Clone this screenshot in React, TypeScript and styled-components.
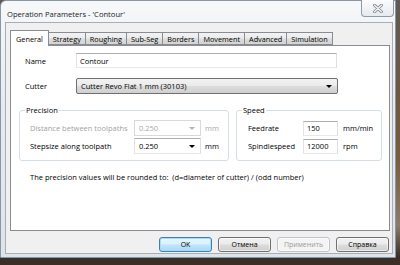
import styled, { createGlobalStyle } from 'styled-components'

const GlobalStyle = createGlobalStyle`
    html, body {
        margin: 0;
        padding: 0;
        width: 400px;
        height: 265px;
        overflow: hidden;
        background: linear-gradient(to bottom, #5e5a55 0%, #6f5840 35%, #7a5b3c 60%, #8c7c6a 85%, #3a2f26 97%);
        font-family: 'Open Sans', 'Noto Sans', sans-serif;
        font-size: 7.5px;
        color: #000;
    }
`

const Window = styled.div`
    box-sizing: border-box;
    width: 396px;
    height: 258px;
    display: flex;
    flex-direction: column;
    border: 1px solid #8a96a3;
    border-radius: 6px 0 0 0;
    background: linear-gradient(to bottom, #f6f8fa 0%, #e7ebef 40%, #dfe4e9 100%);
`

const TitleBar = styled.div`
    height: 21px;
    display: flex;
    justify-content: space-between;
    align-items: flex-start;
    flex-shrink: 0;
`

const Title = styled.div`
    padding: 8px 0 0 6px;
    line-height: 10px;
    font-size: 7.6px;
    color: #1a1a1a;
`

const CloseButton = styled.div`
    box-sizing: border-box;
    width: 33px;
    height: 17px;
    margin: -1px 1px 0 0;
    border: 1px solid #8d9aa8;
    border-top: none;
    border-radius: 0 0 4px 4px;
    background: linear-gradient(to bottom, #fbfcfd, #e6eaee);
    display: flex;
    align-items: center;
    justify-content: center;
`

const Client = styled.div`
    flex: 1;
    margin: 0 2px 3px 4px;
    border: 1px solid #a7aeb7;
    background: #f0f0f0;
    padding: 7px 2px 0 4px;
    display: flex;
    flex-direction: column;
`

const TabStrip = styled.div`
    display: flex;
    align-items: flex-end;
    height: 15px;
    position: relative;
    z-index: 1;
`

const Tab = styled.div<{ $active?: boolean }>`
    box-sizing: border-box;
    height: ${({ $active }) => ($active ? '16px' : '13px')};
    margin-bottom: ${({ $active }) => ($active ? '-1px' : '0')};
    margin-left: -1px;
    padding: 0 ${({ $active }) => ($active ? '5px' : '4px')};
    border: 1px solid #898c95;
    border-bottom: ${({ $active }) => ($active ? 'none' : '1px solid #898c95')};
    background: ${({ $active }) =>
        $active
            ? '#ffffff'
            : 'linear-gradient(to bottom, #f3f3f3 0%, #ebebeb 45%, #dddddd 55%, #d3d3d3 100%)'};
    display: flex;
    align-items: center;
    line-height: 10px;
    font-size: 7.3px;
    white-space: nowrap;
    &:first-child {
        margin-left: 0;
    }
`

const Panel = styled.div`
    box-sizing: border-box;
    width: 380px;
    height: 186px;
    border: 1px solid #898c95;
    background: #ffffff;
    padding: 7px 0 0 0;
    display: flex;
    flex-direction: column;
`

const FieldRow = styled.div<{ $gap?: number }>`
    display: flex;
    align-items: center;
    margin: ${({ $gap }) => $gap ?? 0}px 0 0 14px;
`

const Label = styled.div<{ $width: number; $disabled?: boolean }>`
    width: ${({ $width }) => $width}px;
    flex-shrink: 0;
    line-height: 10px;
    white-space: nowrap;
    color: ${({ $disabled }) => ($disabled ? '#a2a2a2' : '#000')};
`

const TextBox = styled.div<{ $width: number }>`
    box-sizing: border-box;
    width: ${({ $width }) => $width}px;
    height: 15px;
    border: 1px solid;
    border-color: #abadb3 #dbdfe6 #e3e9ef #e2e3ea;
    background: #fff;
    padding-left: 3px;
    display: flex;
    align-items: center;
    line-height: 10px;
`

const DropButton = styled.div<{ $width: number }>`
    box-sizing: border-box;
    width: ${({ $width }) => $width}px;
    height: 16px;
    border: 1px solid #707070;
    border-radius: 2px;
    background: linear-gradient(to bottom, #f2f2f2 0%, #ebebeb 48%, #dddddd 52%, #cfcfcf 100%);
    padding: 0 5px 0 4px;
    display: flex;
    align-items: center;
    justify-content: space-between;
    line-height: 10px;
`

const Arrow = styled.span<{ $disabled?: boolean }>`
    width: 0;
    height: 0;
    border-left: 3px solid transparent;
    border-right: 3px solid transparent;
    border-top: 3px solid ${({ $disabled }) => ($disabled ? '#b4b4b4' : '#000')};
`

const GroupRow = styled.div`
    display: flex;
    gap: 7px;
    margin: 11px 0 0 8px;
`

const Group = styled.fieldset<{ $width: number; $padLeft: number }>`
    box-sizing: border-box;
    width: ${({ $width }) => $width}px;
    margin: 0;
    padding: 5px 0 6px ${({ $padLeft }) => $padLeft}px;
    border: 1px solid #d5dfe5;
    border-radius: 3px;
    display: flex;
    flex-direction: column;
    gap: 2px;
`

const Legend = styled.legend<{ $shift: number }>`
    padding: 0 1px;
    margin-left: ${({ $shift }) => $shift}px;
    line-height: 10px;
`

const GroupLine = styled.div`
    display: flex;
    align-items: center;
    height: 16px;
`

const EditCombo = styled.div<{ $disabled?: boolean }>`
    box-sizing: border-box;
    width: 67px;
    height: 16px;
    border: 1px solid;
    border-color: ${({ $disabled }) =>
        $disabled ? '#d9d9d9' : '#abadb3 #dbdfe6 #e3e9ef #e2e3ea'};
    background: #fff;
    padding: 0 5px 0 4px;
    display: flex;
    align-items: center;
    justify-content: space-between;
    line-height: 10px;
    color: ${({ $disabled }) => ($disabled ? '#a8a8a8' : '#000')};
`

const Unit = styled.div<{ $gap: number; $disabled?: boolean }>`
    margin-left: ${({ $gap }) => $gap}px;
    line-height: 10px;
    color: ${({ $disabled }) => ($disabled ? '#a8a8a8' : '#000')};
`

const Note = styled.div`
    margin: 11px 0 0 19px;
    line-height: 10px;
    white-space: pre;
`

const ButtonBar = styled.div`
    display: flex;
    justify-content: flex-end;
    gap: 6px;
    padding: 6px 1px 0 0;
`

const Button = styled.div<{ $variant?: 'default' | 'disabled' }>`
    box-sizing: border-box;
    width: 53px;
    height: 15px;
    border: 1px solid
        ${({ $variant }) =>
            $variant === 'default' ? '#3c7fb1' : $variant === 'disabled' ? '#c0c4c7' : '#707070'};
    border-radius: 3px;
    background: ${({ $variant }) =>
        $variant === 'default'
            ? 'linear-gradient(to bottom, #eaf6fd 0%, #d9f0fc 48%, #bee6fd 52%, #a7d9f5 100%)'
            : $variant === 'disabled'
            ? '#f4f4f4'
            : 'linear-gradient(to bottom, #f2f2f2 0%, #ebebeb 48%, #dddddd 52%, #cfcfcf 100%)'};
    box-shadow: ${({ $variant }) =>
        $variant === 'default' ? 'inset 0 0 0 1px #a9dcf6' : 'inset 0 0 0 1px rgba(255,255,255,0.6)'};
    color: ${({ $variant }) => ($variant === 'disabled' ? '#9a9a9a' : '#000')};
    display: flex;
    align-items: center;
    justify-content: center;
    line-height: 10px;
    font-size: 7px;
`

const tabs = ['General', 'Strategy', 'Roughing', 'Sub-Seg', 'Borders', 'Movement', 'Advanced', 'Simulation']

export default function App() {
    return (
        <>
            <GlobalStyle />
            <Window>
                <TitleBar>
                    <Title>Operation Parameters - 'Contour'</Title>
                    <CloseButton>
                        <svg width='10' height='9' viewBox='0 0 10 9'>
                            <path d='M1.5 1.2 L8.5 7.8 M8.5 1.2 L1.5 7.8' stroke='#8a9098' strokeWidth='3' strokeLinecap='round' />
                            <path d='M1.5 1.2 L8.5 7.8 M8.5 1.2 L1.5 7.8' stroke='#f4f6f8' strokeWidth='1.2' strokeLinecap='round' />
                        </svg>
                    </CloseButton>
                </TitleBar>
                <Client>
                    <TabStrip>
                        {tabs.map((t, i) => (
                            <Tab key={t} $active={i === 0}>
                                {t}
                            </Tab>
                        ))}
                    </TabStrip>
                    <Panel>
                        <FieldRow>
                            <Label $width={51}>Name</Label>
                            <TextBox $width={261}>Contour</TextBox>
                        </FieldRow>
                        <FieldRow $gap={10}>
                            <Label $width={51}>Cutter</Label>
                            <DropButton $width={262}>
                                <span>Cutter Revo Flat 1 mm (30103)</span>
                                <Arrow />
                            </DropButton>
                        </FieldRow>
                        <GroupRow>
                            <Group $width={210} $padLeft={10}>
                                <Legend $shift={-5}>Precision</Legend>
                                <GroupLine>
                                    <Label $width={104} $disabled>
                                        Distance between toolpaths
                                    </Label>
                                    <EditCombo $disabled>
                                        <span>0.250</span>
                                        <Arrow $disabled />
                                    </EditCombo>
                                    <Unit $gap={4} $disabled>
                                        mm
                                    </Unit>
                                </GroupLine>
                                <GroupLine>
                                    <Label $width={104}>Stepsize along toolpath</Label>
                                    <EditCombo>
                                        <span>0.250</span>
                                        <Arrow />
                                    </EditCombo>
                                    <Unit $gap={4}>mm</Unit>
                                </GroupLine>
                            </Group>
                            <Group $width={146} $padLeft={11}>
                                <Legend $shift={-6}>Speed</Legend>
                                <GroupLine>
                                    <Label $width={55}>Feedrate</Label>
                                    <TextBox $width={35}>150</TextBox>
                                    <Unit $gap={5}>mm/min</Unit>
                                </GroupLine>
                                <GroupLine>
                                    <Label $width={55}>Spindlespeed</Label>
                                    <TextBox $width={35}>12000</TextBox>
                                    <Unit $gap={5}>rpm</Unit>
                                </GroupLine>
                            </Group>
                        </GroupRow>
                        <Note>The precision values will be rounded to:  (d=diameter of cutter) / (odd number)</Note>
                    </Panel>
                    <ButtonBar>
                        <Button $variant='default'>OK</Button>
                        <Button>Отмена</Button>
                        <Button $variant='disabled'>Применить</Button>
                        <Button>Справка</Button>
                    </ButtonBar>
                </Client>
            </Window>
        </>
    )
}
